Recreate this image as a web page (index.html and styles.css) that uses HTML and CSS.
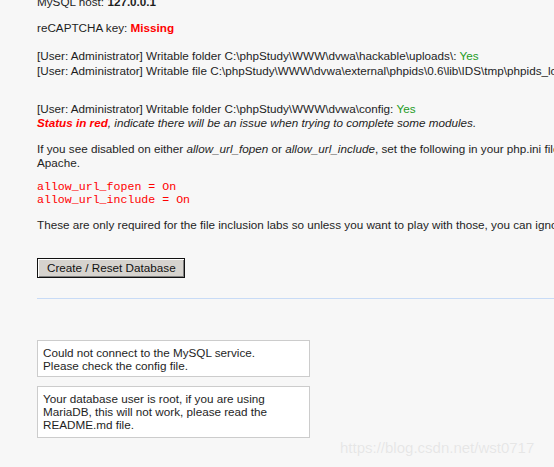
FILE: index.html
```html
<!DOCTYPE html>
<html lang="en">
<head>
  <meta charset="UTF-8" />
  <title>Database Setup</title>
  <link rel="stylesheet" href="styles.css">
</head>
<body>
  <div class="main-body">
    <p class="line">MySQL host: <b>127.0.0.1</b></p>

    <p class="block">reCAPTCHA key: <span class="failure">Missing</span></p>

    <p class="block tight nowrap">
      [User: Administrator] Writable folder C:\phpStudy\WWW\dvwa\hackable\uploads\: <span class="success">Yes</span><br>
      [User: Administrator] Writable file C:\phpStudy\WWW\dvwa\external\phpids\0.6\lib\IDS\tmp\phpids_log.txt: <span class="success">Yes</span>
    </p>

    <p class="block wide-gap nowrap">
      [User: Administrator] Writable folder C:\phpStudy\WWW\dvwa\config: <span class="success">Yes</span><br>
      <i><span class="failure">Status in red</span>, indicate there will be an issue when trying to complete some modules.</i>
    </p>

    <p class="block">If you see disabled on either <i>allow_url_fopen</i> or <i>allow_url_include</i>, set the following in your php.ini file and restart Apache.</p>

    <pre class="config">allow_url_fopen = On
allow_url_include = On</pre>

    <p class="block">These are only required for the file inclusion labs so unless you want to play with those, you can ignore them.</p>

    <form class="setup-form" onsubmit="return false;">
      <button type="submit" class="setup-btn">Create / Reset Database</button>
    </form>

    <hr class="divider">

    <div class="messages">
      <div class="message">Could not connect to the MySQL service.<br>Please check the config file.</div>
      <div class="message">Your database user is root, if you are using MariaDB, this will not work, please read the README.md file.</div>
    </div>
  </div>

  <div class="watermark">https://blog.csdn.net/wst0717</div>
</body>
</html>
```

FILE: styles.css
```css
* {
  box-sizing: border-box;
}
html, body {
  height: 100%;
}
body {
  margin: 0;
  background: #f7f7f7;
  font-family: "Liberation Sans", Arial, sans-serif;
  font-size: 11.7px;
  line-height: 14px;
  color: #1e1e1e;
  overflow: hidden;
  position: relative;
}

/* Main content column */
.main-body {
  width: 637px;
  padding-left: 37px;
  margin-top: -5px;
}

p {
  margin: 0;
}
.block {
  margin-top: 12px;
}
.tight {
  margin-top: 13px;
  line-height: 15px;
}
.wide-gap {
  margin-top: 24px;
}
.nowrap {
  white-space: nowrap;
}

.failure {
  color: #f00;
  font-weight: bold;
}
.success {
  color: #1d9b1d;
}

/* php.ini lines */
.config {
  margin: 10px 0 0;
  font-family: "Liberation Mono", "Courier New", monospace;
  font-size: 11.6px;
  line-height: 13px;
  color: #f00;
}

/* Create / Reset button */
.setup-form {
  margin-top: 26px;
  line-height: 0;
}
.setup-btn {
  font-family: "Liberation Sans", Arial, sans-serif;
  font-size: 11.7px;
  line-height: 14px;
  color: #111;
  background: #d6d3ce;
  border: 1px solid #111;
  box-shadow: inset 1px 1px 0 #fff, inset -1px -1px 0 #808080;
  padding: 2px 9px;
  height: 20px;
  width: 148px;
  white-space: nowrap;
}

.divider {
  border: 0;
  height: 1px;
  background: #c8dbf6;
  margin: 20px 0 0;
}

/* Warning boxes */
.messages {
  margin-top: 41px;
  display: flex;
  flex-direction: column;
  gap: 9px;
}
.message {
  width: 273px;
  background: #fff;
  border: 1px solid #ccc;
  padding: 5px 5px 4px;
  line-height: 13px;
}
.message + .message {
  padding-bottom: 6px;
}

/* CSDN watermark overlay */
.watermark {
  position: absolute;
  left: 340px;
  top: 441px;
  font-size: 15px;
  color: #e6e6e6;
  text-shadow: 0 0 1px #fff;
}
```
